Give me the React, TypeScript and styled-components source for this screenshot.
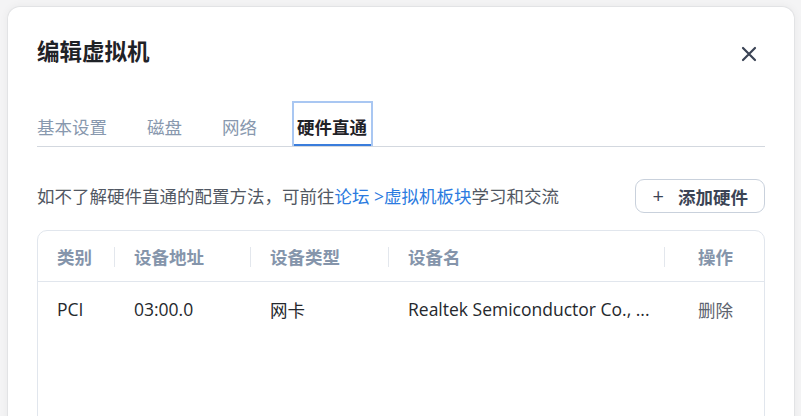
import styled, { createGlobalStyle } from 'styled-components'

const GlobalStyle = createGlobalStyle`
  html, body {
    margin: 0;
    padding: 0;
    background: #f4f4f5;
    overflow: hidden;
  }
  body {
    font-family: 'Open Sans', 'Noto Sans CJK SC', sans-serif;
  }
`

const Page = styled.div`
  padding: 6px 6px 0 7px;
  height: 416px;
  box-sizing: border-box;
`

const Dialog = styled.div`
  background: #fff;
  border: 1px solid #e2e3e5;
  border-bottom: none;
  border-radius: 13px 13px 0 0;
  box-shadow: 0 0 8px rgba(0, 0, 0, 0.05);
  padding: 0 29px;
  height: 460px;
  box-sizing: border-box;
`

const Header = styled.div`
  display: flex;
  align-items: center;
  justify-content: space-between;
  padding-top: 30px;
`

const Title = styled.h2`
  margin: 0;
  font-size: 22.5px;
  line-height: 30px;
  font-weight: 700;
  color: #1f2227;
`

const CloseButton = styled.button`
  display: flex;
  align-items: center;
  justify-content: center;
  width: 22px;
  height: 22px;
  margin: 4px 5px 0 0;
  padding: 0;
  border: none;
  background: none;
  cursor: pointer;
`

const TabBar = styled.div`
  display: flex;
  gap: 40px;
  margin-top: 34px;
  border-bottom: 1px solid #d3d8df;
`

const Tab = styled.div<{ $active?: boolean }>`
  position: relative;
  padding: 13px 0 6px;
  font-size: 17.5px;
  line-height: 26px;
  font-weight: ${(p) => (p.$active ? 700 : 400)};
  color: ${(p) => (p.$active ? '#1f2227' : '#8898ae')};
  ${(p) =>
    p.$active &&
    `
    &::before {
      content: '';
      position: absolute;
      left: -5px;
      right: -6px;
      top: 0;
      bottom: 0;
      border: 2px solid #a9c7f2;
      border-bottom: none;
    }
    &::after {
      content: '';
      position: absolute;
      left: -3px;
      right: -4px;
      bottom: 0;
      height: 2px;
      background: #3a7ddc;
    }
  `}
`

const Toolbar = styled.div`
  display: flex;
  align-items: center;
  justify-content: space-between;
  margin-top: 32px;
`

const Hint = styled.p`
  margin: 0;
  font-size: 17.5px;
  line-height: 26px;
  color: #525863;
`

const Link = styled.a`
  color: #2b7be0;
  text-decoration: none;
`

const AddButton = styled.button`
  display: flex;
  align-items: center;
  gap: 14px;
  height: 34px;
  padding: 0 16px 0 17px;
  border: 1px solid #c9d1dc;
  border-radius: 9px;
  background: #fff;
  font-family: inherit;
  font-size: 17.5px;
  font-weight: 700;
  color: #3b4455;
  cursor: pointer;
`

const Plus = styled.span`
  font-weight: 400;
  font-size: 20px;
  line-height: 1;
`

const TableWrap = styled.div`
  margin-top: 17px;
  border: 1px solid #e1e6ed;
  border-radius: 10px;
  height: 220px;
  overflow: hidden;
`

const Table = styled.table`
  width: 100%;
  border-collapse: collapse;
  table-layout: fixed;
`

const Th = styled.th<{ $center?: boolean }>`
  position: relative;
  height: 50px;
  padding: ${(p) => (p.$center ? '0' : '0 0 0 19px')};
  text-align: ${(p) => (p.$center ? 'center' : 'left')};
  font-size: 17.5px;
  font-weight: 700;
  color: #8595ab;
  border-bottom: 1px solid #e1e6ed;
  &:not(:last-child)::after {
    content: '';
    position: absolute;
    right: 0;
    top: 50%;
    width: 1px;
    height: 20px;
    margin-top: -9px;
    background: #e3e7ed;
  }
`

const Td = styled.td<{ $center?: boolean; $muted?: boolean }>`
  height: 54px;
  padding: ${(p) => (p.$center ? '0' : '0 12px 0 19px')};
  text-align: ${(p) => (p.$center ? 'center' : 'left')};
  font-size: 17.5px;
  color: ${(p) => (p.$muted ? '#5c636e' : '#25282d')};
  white-space: nowrap;
  overflow: hidden;
`

const columns = [
  { title: '类别', width: 77 },
  { title: '设备地址', width: 136 },
  { title: '设备类型', width: 138 },
  { title: '设备名', width: 276 },
  { title: '操作', width: 101, center: true },
]

const rows = [
  {
    bus: 'PCI',
    address: '03:00.0',
    type: '网卡',
    name: 'Realtek Semiconductor Co., Ltd. RTL8125 2.5GbE Controller',
  },
]

// names are cut by character count, as the list does
const shorten = (s: string, max = 26) =>
  s.length > max ? s.slice(0, max) + ' ...' : s

export default function App() {
  return (
    <>
      <GlobalStyle />
      <Page>
        <Dialog>
          <Header>
            <Title>编辑虚拟机</Title>
            <CloseButton aria-label="关闭">
              <svg width="16" height="16" viewBox="0 0 16 16">
                <path
                  d="M2 2 L14 14 M14 2 L2 14"
                  stroke="#3b4455"
                  strokeWidth="2.2"
                  strokeLinecap="round"
                />
              </svg>
            </CloseButton>
          </Header>

          <TabBar>
            <Tab>基本设置</Tab>
            <Tab>磁盘</Tab>
            <Tab>网络</Tab>
            <Tab $active>硬件直通</Tab>
          </TabBar>

          <Toolbar>
            <Hint>
              如不了解硬件直通的配置方法，可前往
              <Link href="#">论坛 &gt;虚拟机板块</Link>
              学习和交流
            </Hint>
            <AddButton>
              <Plus>+</Plus>
              添加硬件
            </AddButton>
          </Toolbar>

          <TableWrap>
            <Table>
              <colgroup>
                {columns.map((c) => (
                  <col key={c.title} style={{ width: c.width }} />
                ))}
              </colgroup>
              <thead>
                <tr>
                  {columns.map((c) => (
                    <Th key={c.title} $center={c.center}>
                      {c.title}
                    </Th>
                  ))}
                </tr>
              </thead>
              <tbody>
                {rows.map((r) => (
                  <tr key={r.address}>
                    <Td>{r.bus}</Td>
                    <Td>{r.address}</Td>
                    <Td>{r.type}</Td>
                    <Td title={r.name}>{shorten(r.name)}</Td>
                    <Td $center $muted>
                      删除
                    </Td>
                  </tr>
                ))}
              </tbody>
            </Table>
          </TableWrap>
        </Dialog>
      </Page>
    </>
  )
}
